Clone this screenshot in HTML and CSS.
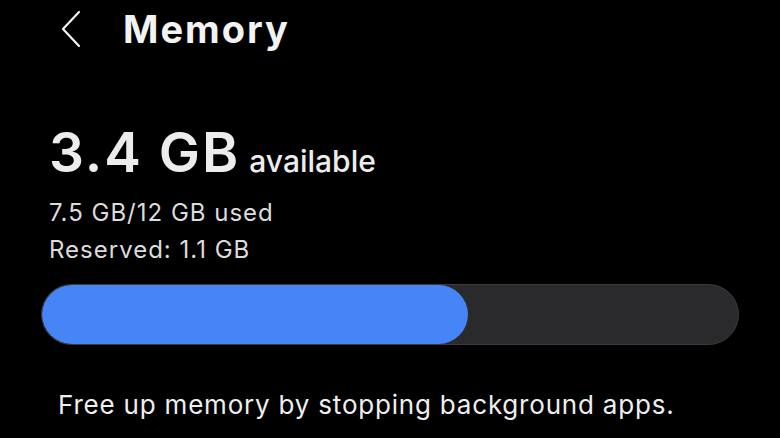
FILE: index.html
```html
<!DOCTYPE html>
<html lang="en">
<head>
    <meta charset="UTF-8">
    <meta name="viewport" content="width=device-width, initial-scale=1.0">
    <title>Memory</title>
    <link rel="stylesheet" href="styles.css">
</head>
<body>
<div class="screen">
    <div class="topbar">
        <svg class="back" width="22" height="38" viewBox="0 0 22 38">
            <polyline points="19,2 3,19 19,36" fill="none" stroke="#f2f2f2" stroke-width="2.2" stroke-linecap="round" stroke-linejoin="round"/>
        </svg>
        <h1>Memory</h1>
    </div>

    <div class="summary">
        <div class="available">
            <span class="amount">3.4 GB</span>
            <span class="unit">available</span>
        </div>
        <div class="details">
            <div class="detail">7.5 GB/12 GB used</div>
            <div class="detail">Reserved: 1.1 GB</div>
        </div>
    </div>

    <div class="bar">
        <div class="bar-fill" style="width: 61.2%"></div>
    </div>

    <p class="hint">Free up memory by stopping background apps.</p>
</div>
</body>
</html>
```

FILE: styles.css
```css
body {
    font-family: Inter, "Noto Sans", sans-serif;
    background-color: #000;
    color: #f2f2f2;
    margin: 0;
    padding: 0;
}

.screen {
    width: 780px;
    height: 438px;
    overflow: hidden;
}

.topbar {
    display: flex;
    align-items: center;
    gap: 41px;
    padding: 4px 0 0 60px;
    height: 49px;
}

.back {
    display: block;
}

h1 {
    margin: 0;
    font-size: 38px;
    font-weight: 700;
    letter-spacing: 2px;
    line-height: 44px;
}

.summary {
    padding: 69px 0 0 49px;
}

.available {
    display: flex;
    align-items: baseline;
    gap: 9px;
    line-height: 60px;
}

.amount {
    font-size: 55px;
    font-weight: 600;
    letter-spacing: 2px;
    color: #ececec;
}

.unit {
    font-size: 30px;
    font-weight: 500;
    color: #ececec;
}

.details {
    padding-top: 3px;
}

.detail {
    font-size: 24px;
    line-height: 37px;
    letter-spacing: 1px;
    color: #dcdcdc;
}

.bar {
    margin: 16px 41px 0 41px;
    height: 59px;
    border: 1px solid #3c3c3e;
    border-radius: 31px;
    background-color: #2a2a2c;
    overflow: hidden;
}

.bar-fill {
    height: 100%;
    background-color: #4585f6;
    border-radius: 31px;
}

.hint {
    margin: 0;
    padding: 42px 0 0 58px;
    font-size: 26px;
    line-height: 36px;
    letter-spacing: 0.8px;
    color: #eeeeee;
}
```
